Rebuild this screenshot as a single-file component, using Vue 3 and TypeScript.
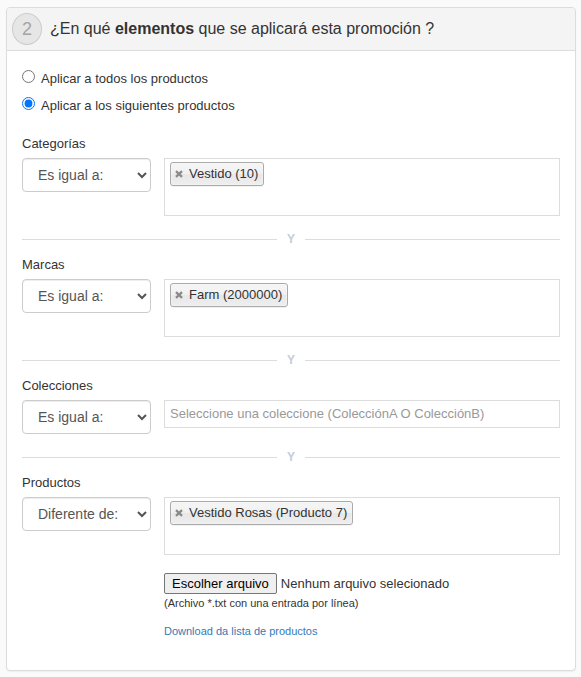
<script setup lang="ts">
import { ref } from 'vue'

interface Filter {
  id: string
  label: string
  operator: string
  tags: string[]
  placeholder: string
}

const scope = ref<'all' | 'some'>('some')

const filters = ref<Filter[]>([
  { id: 'categorias', label: 'Categorías', operator: 'eq', tags: ['Vestido (10)'], placeholder: '' },
  { id: 'marcas', label: 'Marcas', operator: 'eq', tags: ['Farm (2000000)'], placeholder: '' },
  {
    id: 'colecciones',
    label: 'Colecciones',
    operator: 'eq',
    tags: [],
    placeholder: 'Seleccione una coleccione (ColecciónA O ColecciónB)',
  },
  { id: 'productos', label: 'Productos', operator: 'ne', tags: ['Vestido Rosas (Producto 7)'], placeholder: '' },
])

const fileInput = ref<HTMLInputElement | null>(null)
const fileName = ref('')

function onFile(): void {
  fileName.value = fileInput.value?.files?.[0]?.name ?? ''
}
</script>

<template>
  <section class="card">
    <header class="card-header">
      <span class="step">2</span>
      <h2 class="title">¿En qué <strong>elementos</strong> que se aplicará esta promoción ?</h2>
    </header>

    <div class="card-body">
      <div class="scope">
        <label class="radio"><input v-model="scope" type="radio" name="scope" value="all" /><span>Aplicar a todos los productos</span></label>
        <label class="radio"><input v-model="scope" type="radio" name="scope" value="some" /><span>Aplicar a los siguientes productos</span></label>
      </div>

      <template v-for="(filter, index) in filters" :key="filter.id">
        <div v-if="index > 0" class="joiner">Y</div>
        <div class="filter">
          <label class="filter-label" :for="filter.id">{{ filter.label }}</label>
          <div class="filter-row">
            <select :id="filter.id" v-model="filter.operator" class="operator">
              <option value="eq">Es igual a:</option>
              <option value="ne">Diferente de:</option>
            </select>
            <input
              v-if="filter.placeholder && !filter.tags.length"
              class="search"
              type="text"
              :placeholder="filter.placeholder"
              :aria-label="filter.label"
            />
            <ul v-else class="tags">
              <li v-for="(tag, i) in filter.tags" :key="tag" class="tag">
                <button class="remove" type="button" :aria-label="tag" @click="filter.tags.splice(i, 1)">
                  <svg viewBox="0 0 8 8" width="8" height="8" aria-hidden="true">
                    <path d="M1 1.2 L7 6.8 M7 1.2 L1 6.8" fill="none" stroke="#8a8a8a" stroke-width="2.3" />
                  </svg>
                </button>
                <span>{{ tag }}</span>
              </li>
            </ul>
          </div>
        </div>
      </template>

      <div class="upload">
        <div class="file">
          <button class="choose" type="button" @click="fileInput?.click()">Escolher arquivo</button>
          <span>{{ fileName || 'Nenhum arquivo selecionado' }}</span>
          <input ref="fileInput" type="file" accept=".txt" hidden @change="onFile" />
        </div>
        <p class="hint">(Archivo *.txt con una entrada por línea)</p>
        <a class="download" href="#">Download da lista de productos</a>
      </div>
    </div>
  </section>
</template>

<style>
body {
  background: #fafafa;
}
</style>

<style scoped>
* {
  box-sizing: border-box;
}

.card {
  margin: 7px 5px 6px 6px;
  border: 1px solid #dcdcdc;
  border-radius: 4px;
  background: #fff;
  box-shadow: 0 1px 1px rgba(0, 0, 0, 0.05);
  color: #333;
  font-family: "Liberation Sans", Arial, sans-serif;
  font-size: 13px;
  line-height: 20px;
}

.card-header {
  display: flex;
  align-items: center;
  gap: 8px;
  padding: 5px;
  border-bottom: 1px solid #dcdcdc;
  border-radius: 3px 3px 0 0;
  background: #f4f4f4;
}

.step {
  width: 30px;
  height: 32px;
  border: 1px solid #ccc;
  border-radius: 50%;
  background: #e6e6e6;
  color: #a4a4a4;
  font-size: 18px;
  line-height: 30px;
  text-align: center;
}

.title {
  margin: 0;
  font-size: 16px;
  font-weight: 400;
}

.card-body {
  padding: 18px 15px 29px;
}

.scope {
  display: grid;
  gap: 7px;
  margin-bottom: 18px;
}

.radio {
  display: flex;
  align-items: flex-start;
  gap: 6px;
}

.radio input {
  width: 13px;
  height: 13px;
  margin: 1px 0 0;
}

.filter-label {
  display: block;
  margin-bottom: 4px;
}

.filter-row {
  display: flex;
  align-items: flex-start;
  gap: 13px;
}

.operator {
  flex: none;
  width: 129px;
  height: 34px;
  padding: 6px 0 6px 11px;
  border: 1px solid #ccc;
  border-radius: 4px;
  background: #fff;
  box-shadow: inset 0 1px 1px rgba(0, 0, 0, 0.075);
  color: #555;
  font-family: inherit;
  font-size: 14px;
}

.tags,
.search {
  flex: 1;
  min-width: 0;
  margin: 0;
  border: 1px solid #dcdcdc;
  background: #fff;
}

.tags {
  display: flex;
  flex-wrap: wrap;
  align-items: flex-start;
  gap: 5px;
  min-height: 58px;
  padding: 3px 5px;
  list-style: none;
}

.search {
  height: 28px;
  padding: 0 5px 2px;
  border-radius: 0;
  color: #333;
  font-family: inherit;
  font-size: 13px;
}

.search::placeholder {
  color: #999;
}

.tag {
  display: flex;
  align-items: center;
  gap: 6px;
  height: 24px;
  padding: 0 5px 0 4px;
  border: 1px solid #aaa;
  border-radius: 3px;
  background: linear-gradient(#f4f4f4 20%, #f0f0f0 50%, #e8e8e8 52%, #eee 100%);
  box-shadow: inset 0 0 2px #fff, 0 1px 0 rgba(0, 0, 0, 0.05);
}

.remove {
  display: flex;
  padding: 0;
  border: 0;
  background: none;
}

.joiner {
  display: flex;
  align-items: center;
  gap: 10px;
  margin: 13px 0 6px;
  color: #c5ccd9;
  font-size: 12px;
  font-weight: 700;
}

.joiner::before,
.joiner::after {
  flex: 1;
  height: 1px;
  background: #dcdcdc;
  content: "";
}

.upload {
  margin: 18px 0 0 142px;
  font-size: 11px;
}

.file {
  display: flex;
  align-items: center;
  gap: 4px;
  font-size: 13px;
}

.choose {
  height: 21px;
  padding: 0 7px;
  border: 1px solid #767676;
  border-radius: 2px;
  background: #efefef;
  color: #000;
  font-family: inherit;
  font-size: 13px;
}

.hint {
  margin: -1px 0 8px;
}

.download {
  color: #337ab7;
  text-decoration: none;
}
</style>
